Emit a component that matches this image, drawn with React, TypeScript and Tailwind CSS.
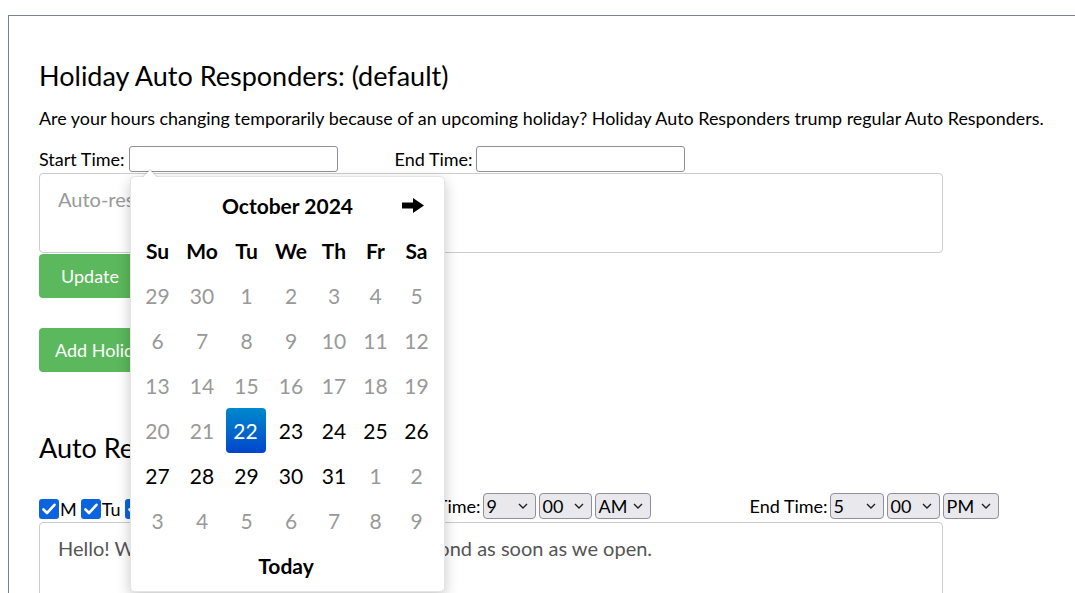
import React from "react";

const days = ["M", "Tu", "W", "Th", "F", "Sa", "Su"];

function Check() {
  return (
    <span className="inline-flex h-[20px] w-[20px] items-center justify-center rounded-[3px] bg-[#0b64de]">
      <svg width="14" height="12" viewBox="0 0 14 12">
        <polyline points="1.5,6.5 5,10 12.5,1.8" fill="none" stroke="white" strokeWidth="2.6" strokeLinecap="round" strokeLinejoin="round" />
      </svg>
    </span>
  );
}

function Sel({ v, w }: { v: string; w: string }) {
  return (
    <div className={`flex h-[26px] items-center justify-between rounded-[4px] border border-[#8f8f9d] bg-[#e9e9ed] pl-[3px] pr-[7px] text-[18px] leading-none text-black ${w}`}>
      <span>{v}</span>
      <svg width="10" height="6" viewBox="0 0 10 6">
        <polyline points="1,1 5,5 9,1" fill="none" stroke="#222" strokeWidth="1.4" />
      </svg>
    </div>
  );
}

const cols = ["w-[45px]", "w-[44px]", "w-[45px]", "w-[44px]", "w-[42px]", "w-[41px]", "w-[41px]"];

type D = { n: number; o?: boolean; s?: boolean };
const weeks: D[][] = [
  [{ n: 29, o: true }, { n: 30, o: true }, { n: 1, o: true }, { n: 2, o: true }, { n: 3, o: true }, { n: 4, o: true }, { n: 5, o: true }],
  [{ n: 6, o: true }, { n: 7, o: true }, { n: 8, o: true }, { n: 9, o: true }, { n: 10, o: true }, { n: 11, o: true }, { n: 12, o: true }],
  [{ n: 13, o: true }, { n: 14, o: true }, { n: 15, o: true }, { n: 16, o: true }, { n: 17, o: true }, { n: 18, o: true }, { n: 19, o: true }],
  [{ n: 20, o: true }, { n: 21, o: true }, { n: 22, s: true }, { n: 23 }, { n: 24 }, { n: 25 }, { n: 26 }],
  [{ n: 27 }, { n: 28 }, { n: 29 }, { n: 30 }, { n: 31 }, { n: 1, o: true }, { n: 2, o: true }],
  [{ n: 3, o: true }, { n: 4, o: true }, { n: 5, o: true }, { n: 6, o: true }, { n: 7, o: true }, { n: 8, o: true }, { n: 9, o: true }],
];

function Picker() {
  return (
    <div className="absolute left-[130px] top-[176px] h-[416px] w-[315px] rounded-[5px] border border-black/10 bg-white pl-[4px] pt-[6px] text-[21px] text-black shadow-[0_5px_14px_rgba(0,0,0,0.22)]">
      <div className="absolute left-[11px] top-[-8px] h-0 w-0 border-x-[8px] border-b-[8px] border-x-transparent border-b-black/15" />
      <div className="absolute left-[12px] top-[-7px] h-0 w-0 border-x-[7px] border-b-[7px] border-x-transparent border-b-white" />
      <div className="flex h-[45px] items-center">
        <div className="w-[45px]" />
        <div className="flex w-[215px] items-center justify-center font-bold">October 2024</div>
        <div className="flex w-[41px] items-center justify-center pr-[5px]">
          <svg width="22" height="15" viewBox="0 0 22 15">
            <rect x="0" y="4.5" width="12" height="6" fill="#000" />
            <polygon points="11,0 22,7.5 11,15" fill="#000" />
          </svg>
        </div>
      </div>
      <div className="flex h-[45px] items-center font-bold">
        {["Su", "Mo", "Tu", "We", "Th", "Fr", "Sa"].map((d, i) => (
          <div key={d} className={`flex items-center justify-center ${cols[i]}`}>{d}</div>
        ))}
      </div>
      {weeks.map((w, r) => (
        <div key={r} className="flex h-[45px] items-center">
          {w.map((d, i) => (
            <div key={i} className={`flex h-[45px] items-center justify-center ${cols[i]}`}>
              {d.s ? (
                <div className="mr-[2px] flex h-[45px] w-[40px] items-center justify-center rounded-[4px] bg-gradient-to-b from-[#0088cc] to-[#0044cc] text-white">
                  {d.n}
                </div>
              ) : (
                <span className={d.o ? "text-[#999]" : "text-black"}>{d.n}</span>
              )}
            </div>
          ))}
        </div>
      ))}
      <div className="flex h-[45px] w-[302px] items-center justify-center font-bold">Today</div>
    </div>
  );
}

export default function App() {
  return (
    <div className="relative h-[593px] w-[1075px] overflow-hidden bg-white font-['Lato',sans-serif] text-black">
      <div className="ml-2 mt-[15px] h-[600px] border-l border-t border-[#7a8291] pl-[30px] pt-[44px]">
        <h2 className="text-[27px] leading-[32px]">Holiday Auto Responders: (default)</h2>
        <p className="mt-[14px] text-[17.9px] leading-[24px]">
          Are your hours changing temporarily because of an upcoming holiday? Holiday Auto Responders trump regular Auto Responders.
        </p>
        <div className="mt-4 flex h-[26px] items-center text-[18px]">
          <span>Start Time:</span>
          <input className="ml-[4px] h-[26px] w-[209px] rounded-[3px] border border-[#8f8f9d] bg-white" />
          <span className="ml-[57px]">End Time:</span>
          <input className="ml-[3px] h-[26px] w-[209px] rounded-[3px] border border-[#8f8f9d] bg-white" />
        </div>
        <textarea
          className="mt-px block h-[80px] w-[904px] resize-none rounded-[4px] border border-[#ccc] px-[18px] pt-[13px] text-[20px] leading-[24px] placeholder:text-[#999]"
          placeholder="Auto-responder message"
        />
        <button className="mt-px block h-[44px] rounded-[4px] bg-[#5cb85c] px-[22px] text-[18px] text-white">Update</button>
        <button className="mt-[30px] block h-[44px] rounded-[4px] bg-[#5cb85c] px-[16px] text-[18px] text-white">Add Holiday Auto Responder</button>
        <h2 className="mt-[60px] text-[27px] leading-[32px]">Auto Responders: (default)</h2>
        <div className="mt-[29px] flex h-[26px] items-center text-[18px]">
          <div className="flex w-[356px] items-center self-end">
            {days.map((d) => (
              <span key={d} className="mr-[4px] flex items-center">
                <Check />
                <span className="ml-[1px] leading-[20px]">{d}</span>
              </span>
            ))}
          </div>
          <span>Start Time:</span>
          <div className="ml-[2px] flex gap-[3px]">
            <Sel v="9" w="w-[53px]" />
            <Sel v="00" w="w-[53px]" />
            <Sel v="AM" w="w-[56px]" />
          </div>
          <span className="ml-[99px]">End Time:</span>
          <div className="ml-[2px] flex gap-[3px]">
            <Sel v="5" w="w-[54px]" />
            <Sel v="00" w="w-[53px]" />
            <Sel v="PM" w="w-[56px]" />
          </div>
        </div>
        <div className="mt-[3px] h-[100px] w-[904px] rounded-[4px] border border-[#ccc] px-[18px] pt-[13px] text-[20px] leading-[24px] text-[#555]">
          Hello! We are currently closed. We will respond as soon as we open.
        </div>
      </div>
      <Picker />
    </div>
  );
}
